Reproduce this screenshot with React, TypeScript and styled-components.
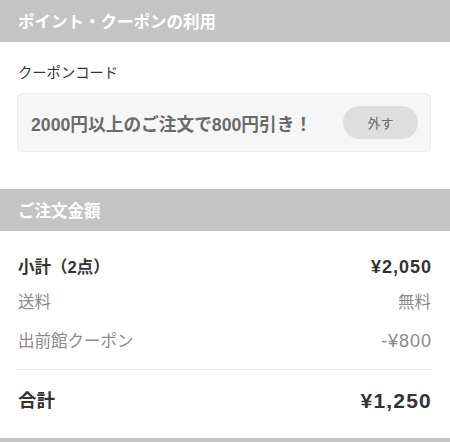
import React from "react";
import styled, { createGlobalStyle } from "styled-components";

const Global = createGlobalStyle`
  html, body { margin: 0; padding: 0; background: #fff; overflow: hidden; }
  body { font-family: "Liberation Sans", "Noto Sans CJK JP", "Noto Sans", sans-serif; color: #333; }
`;

const Page = styled.div`
  width: 450px;
  display: flex;
  flex-direction: column;
`;

const SectionHeader = styled.div`
  height: 42px;
  background: #c4c4c4;
  color: #fff;
  font-weight: 700;
  font-size: 16.5px;
  display: flex;
  align-items: center;
  padding-left: 18px;
`;

const CouponSection = styled.div`
  padding: 21px 19px 37px 17px;
  display: flex;
  flex-direction: column;
`;

const FieldLabel = styled.div`
  font-size: 14.3px;
  line-height: 20px;
  color: #333;
  padding-left: 1px;
  margin-bottom: 10px;
`;

const CouponBox = styled.div`
  height: 57px;
  border: 1px solid #ebebeb;
  background: #f6f6f6;
  border-radius: 6px;
  display: flex;
  align-items: center;
  justify-content: space-between;
  padding: 0 12px 0 13px;
`;

const CouponText = styled.span`
  font-size: 17.7px;
  font-weight: 700;
  color: #6b6b6b;
`;

const RemoveButton = styled.button`
  width: 75px;
  height: 33px;
  border: none;
  border-radius: 17px;
  background: #dedede;
  color: #6a6a6a;
  font-family: inherit;
  font-size: 13px;
  padding: 0;
`;

const PriceSection = styled.div`
  padding: 24px 19px 23px 17px;
  display: flex;
  flex-direction: column;
`;

type Variant = "main" | "sub" | "total";

const Row = styled.div<{ $mt?: number; $variant: Variant }>`
  display: flex;
  justify-content: space-between;
  align-items: center;
  margin-top: ${(p) => p.$mt ?? 0}px;
  line-height: ${(p) => (p.$variant === "total" ? 28 : 24)}px;
  padding-left: 1px;
`;

const Label = styled.span<{ $variant: Variant }>`
  font-size: ${(p) => (p.$variant === "total" ? 18.5 : p.$variant === "main" ? 16.5 : 16.5)}px;
  font-weight: ${(p) => (p.$variant === "sub" ? 400 : 700)};
  color: ${(p) => (p.$variant === "sub" ? "#8a8a8a" : "#333")};
`;

const Value = styled.span<{ $variant: Variant; $numeric?: boolean }>`
  font-size: ${(p) => (p.$variant === "total" ? 21 : p.$variant === "main" ? 18 : p.$numeric ? 18 : 16.5)}px;
  font-weight: ${(p) => (p.$variant === "sub" ? 400 : 700)};
  color: ${(p) => (p.$variant === "sub" ? "#8a8a8a" : "#333")};
  letter-spacing: ${(p) => (p.$numeric ? (p.$variant === "total" ? 1.2 : 1) : 0)}px;
  margin-right: ${(p) => (p.$numeric ? -1 : 0)}px;
`;

const Divider = styled.hr`
  border: none;
  height: 1px;
  background: #ececec;
  margin: 16px 0 17px;
  width: 100%;
`;

const BottomBar = styled.div`
  height: 10px;
  background: #c4c4c4;
`;

export default function App() {
  return (
    <Page>
      <Global />
      <SectionHeader>ポイント・クーポンの利用</SectionHeader>
      <CouponSection>
        <FieldLabel>クーポンコード</FieldLabel>
        <CouponBox>
          <CouponText>2000円以上のご注文で800円引き！</CouponText>
          <RemoveButton>外す</RemoveButton>
        </CouponBox>
      </CouponSection>
      <SectionHeader>ご注文金額</SectionHeader>
      <PriceSection>
        <Row $variant="main">
          <Label $variant="main">小計（2点）</Label>
          <Value $variant="main" $numeric>¥2,050</Value>
        </Row>
        <Row $variant="sub" $mt={11}>
          <Label $variant="sub">送料</Label>
          <Value $variant="sub">無料</Value>
        </Row>
        <Row $variant="sub" $mt={15}>
          <Label $variant="sub">出前館クーポン</Label>
          <Value $variant="sub" $numeric>-¥800</Value>
        </Row>
        <Divider />
        <Row $variant="total">
          <Label $variant="total">合計</Label>
          <Value $variant="total" $numeric>¥1,250</Value>
        </Row>
      </PriceSection>
      <BottomBar />
    </Page>
  );
}
